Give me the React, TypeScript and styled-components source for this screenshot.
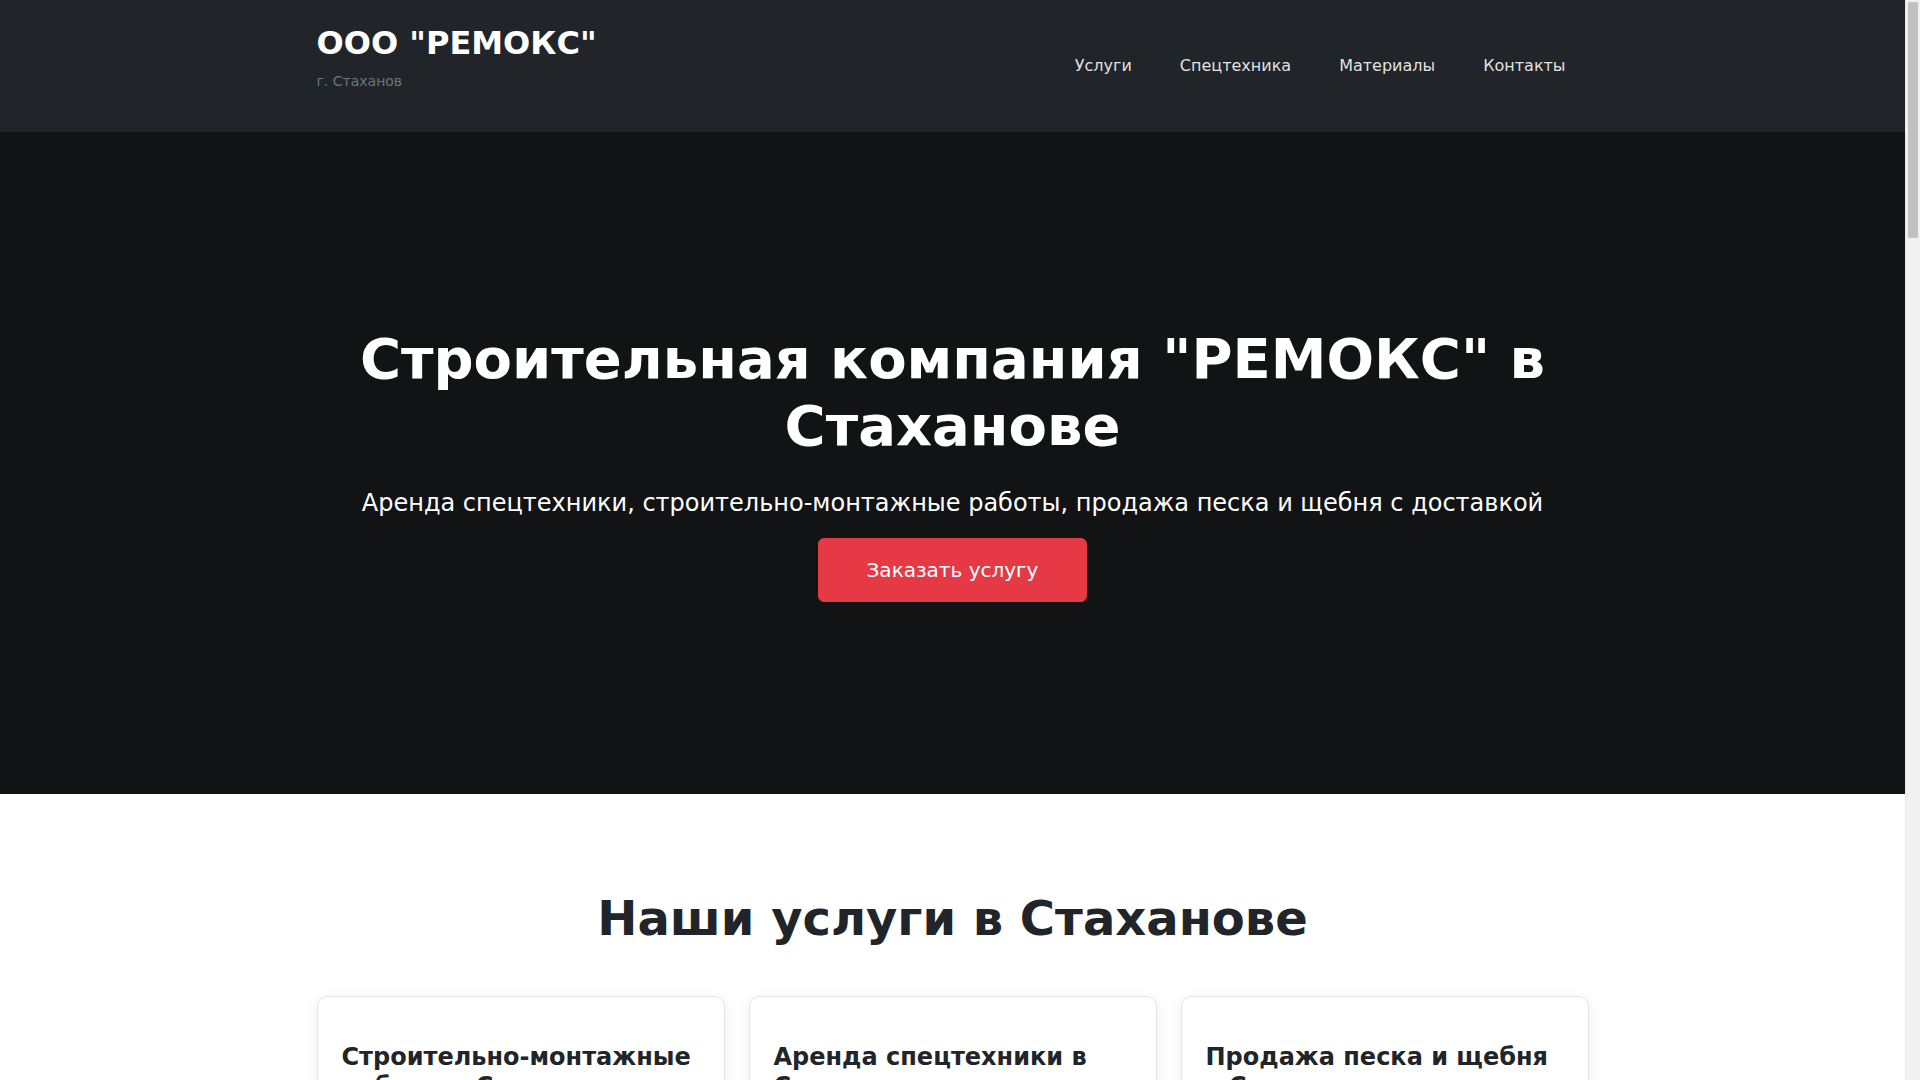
import styled, { createGlobalStyle } from "styled-components";

const GlobalStyle = createGlobalStyle`
  html, body {
    margin: 0;
    padding: 0;
  }
  body {
    font-family: "DejaVu Sans", "Noto Sans", sans-serif;
    color: #212529;
    background: #ffffff;
  }
  * {
    box-sizing: border-box;
  }
`;

/* page content leaves room for the scrollbar strip on the right */
const Page = styled.div`
  margin-right: 15px;
`;

const ScrollTrack = styled.div`
  position: fixed;
  top: 0;
  right: 0;
  width: 15px;
  height: 100vh;
  background: #f1f1f1;
  border-left: 1px solid #e8e8e8;
`;

const ScrollThumb = styled.div`
  position: absolute;
  top: 2px;
  left: 2px;
  right: 2px;
  height: 236px;
  background: #c1c1c1;
  border-radius: 1px;
`;

const Container = styled.div`
  max-width: 1272px;
  margin: 0 auto;
`;

const Header = styled.header`
  background: #212529;
`;

const HeaderInner = styled(Container)`
  display: flex;
  justify-content: space-between;
  min-height: 132px;
`;

const Brand = styled.div`
  align-self: flex-start;
  padding-top: 24px;
`;

const Logo = styled.a`
  display: block;
  font-size: 32px;
  font-weight: 700;
  line-height: 1.2;
  color: #ffffff;
  text-decoration: none;
`;

const City = styled.div`
  margin-top: 9px;
  font-size: 14px;
  line-height: 1.5;
  color: #6c757d;
`;

const Nav = styled.nav`
  align-self: center;
  display: flex;
`;

const NavLink = styled.a`
  padding: 0 24px;
  font-size: 16px;
  line-height: 1.5;
  color: rgba(255, 255, 255, 0.88);
  text-decoration: none;

  &:last-child {
    padding-right: 23px;
  }
`;

const Hero = styled.section`
  background: #111315;
  padding: 193px 0 192px;
  text-align: center;
  color: #ffffff;
`;

const HeroTitle = styled.h1`
  margin: 0 0 26px;
  font-size: 56px;
  font-weight: 700;
  line-height: 1.2;
`;

const Lead = styled.p`
  margin: 0 0 17px;
  font-size: 24px;
  font-weight: 400;
  line-height: 1.5;
  color: #ffffff;
`;

const Button = styled.a`
  display: inline-block;
  padding: 16px 48px;
  font-size: 20px;
  line-height: 1.5;
  color: #ffffff;
  background: #e63946;
  border: 1px solid #e63946;
  border-radius: 6px;
  text-decoration: none;
`;

const Section = styled.section`
  padding: 96px 0 80px;
  background: #ffffff;
`;

const SectionTitle = styled.h2`
  margin: 0 0 48px;
  font-size: 48px;
  font-weight: 700;
  line-height: 1.2;
  text-align: center;
  color: #212529;
`;

const Cards = styled.div`
  display: grid;
  grid-template-columns: repeat(3, 1fr);
  gap: 24px;
`;

const Card = styled.article`
  background: #ffffff;
  border: 1px solid #e3e5e8;
  border-radius: 10px;
  box-shadow: 0 4px 16px rgba(0, 0, 0, 0.07);
  padding: 46px 24px 32px;
`;

const CardTitle = styled.h3`
  margin: 0 0 16px;
  font-size: 24px;
  font-weight: 700;
  line-height: 1.2;
  color: #212529;
`;

const CardText = styled.p`
  margin: 0 0 16px;
  font-size: 16px;
  line-height: 1.5;
  color: #495057;
`;

const List = styled.ul`
  margin: 0;
  padding-left: 20px;
  font-size: 16px;
  line-height: 1.7;
  color: #495057;
`;

const Footer = styled.footer`
  background: #212529;
  color: #adb5bd;
  padding: 40px 0;
  font-size: 14px;
  text-align: center;
`;

const services = [
  {
    title: "Строительно-монтажные работы в Стаханове",
    text: "Выполняем полный комплекс строительно-монтажных работ любой сложности.",
    items: ["Земляные работы", "Монтаж конструкций", "Благоустройство территорий"],
  },
  {
    title: "Аренда спецтехники в Стаханове",
    text: "Предоставляем спецтехнику с опытными операторами на любой срок.",
    items: ["Экскаваторы", "Самосвалы", "Автокраны"],
  },
  {
    title: "Продажа песка и щебня в Стаханове",
    text: "Продаём нерудные материалы с доставкой по городу и области.",
    items: ["Песок карьерный", "Щебень разных фракций", "Отсев"],
  },
];

export default function App() {
  return (
    <>
      <GlobalStyle />
      <Page>
        <Header>
          <HeaderInner>
            <Brand>
              <Logo href="#">ООО "РЕМОКС"</Logo>
              <City>г. Стаханов</City>
            </Brand>
            <Nav>
              <NavLink href="#services">Услуги</NavLink>
              <NavLink href="#machinery">Спецтехника</NavLink>
              <NavLink href="#materials">Материалы</NavLink>
              <NavLink href="#contacts">Контакты</NavLink>
            </Nav>
          </HeaderInner>
        </Header>

        <Hero>
          <Container>
            <HeroTitle>Строительная компания "РЕМОКС" в Стаханове</HeroTitle>
            <Lead>
              Аренда спецтехники, строительно-монтажные работы, продажа песка и
              щебня с доставкой
            </Lead>
            <Button href="#contacts">Заказать услугу</Button>
          </Container>
        </Hero>

        <Section id="services">
          <Container>
            <SectionTitle>Наши услуги в Стаханове</SectionTitle>
            <Cards>
              {services.map((s) => (
                <Card key={s.title}>
                  <CardTitle>{s.title}</CardTitle>
                  <CardText>{s.text}</CardText>
                  <List>
                    {s.items.map((i) => (
                      <li key={i}>{i}</li>
                    ))}
                  </List>
                </Card>
              ))}
            </Cards>
          </Container>
        </Section>

        <Footer id="contacts">
          <Container>© ООО "РЕМОКС", г. Стаханов</Container>
        </Footer>
      </Page>
      <ScrollTrack>
        <ScrollThumb />
      </ScrollTrack>
    </>
  );
}
